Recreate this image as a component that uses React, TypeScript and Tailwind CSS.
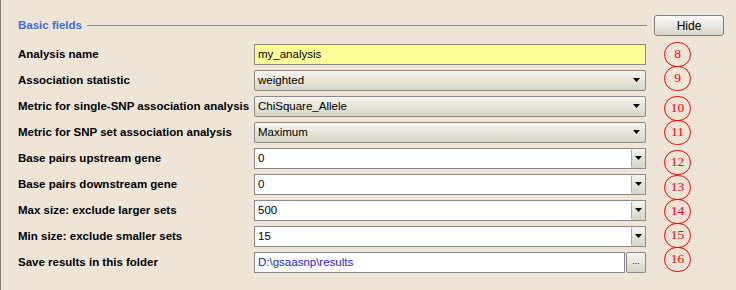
import React from 'react';

type Field =
  | { kind: 'text'; label: string; value: string }
  | { kind: 'select'; label: string; value: string }
  | { kind: 'combo'; label: string; value: string }
  | { kind: 'folder'; label: string; value: string };

const fields: Field[] = [
  { kind: 'text', label: 'Analysis name', value: 'my_analysis' },
  { kind: 'select', label: 'Association statistic', value: 'weighted' },
  { kind: 'select', label: 'Metric for single-SNP association analysis', value: 'ChiSquare_Allele' },
  { kind: 'select', label: 'Metric for SNP set association analysis', value: 'Maximum' },
  { kind: 'combo', label: 'Base pairs upstream gene', value: '0' },
  { kind: 'combo', label: 'Base pairs downstream gene', value: '0' },
  { kind: 'combo', label: 'Max size: exclude larger sets', value: '500' },
  { kind: 'combo', label: 'Min size: exclude smaller sets', value: '15' },
  { kind: 'folder', label: 'Save results in this folder', value: 'D:\\gsaasnp\\results' },
];

// annotation markers: [number, top]
const markers: [number, number][] = [
  [8, 42],
  [9, 66],
  [10, 96],
  [11, 120],
  [12, 150],
  [13, 175],
  [14, 199],
  [15, 223],
  [16, 247],
];

const Arrow = () => (
  <svg width="8" height="5" viewBox="0 0 8 5">
    <path d="M0 0h7L3.5 4z" fill="#000" />
  </svg>
);

const FieldInput: React.FC<{ field: Field }> = ({ field }) => {
  if (field.kind === 'text') {
    return (
      <div className="w-[392px] h-[21px] border border-[#8a8a8a] bg-[#ffff99] flex items-center pl-[3px] text-black">
        {field.value}
      </div>
    );
  }
  if (field.kind === 'select') {
    return (
      <div className="w-[392px] h-[21px] border border-[#8a8a8a] rounded-[2px] bg-gradient-to-b from-[#f6f4ee] to-[#d8d4c7] flex items-center pl-[3px] pr-[4px] text-black">
        <span className="flex-1">{field.value}</span>
        <Arrow />
      </div>
    );
  }
  if (field.kind === 'combo') {
    return (
      <div className="w-[392px] h-[21px] border border-[#8a8a8a] bg-white flex items-center text-black">
        <span className="flex-1 pl-[3px]">{field.value}</span>
        <div className="w-[14px] h-[19px] rounded-[2px] bg-gradient-to-b from-[#f6f4ee] to-[#d8d4c7] border-l border-[#a9a9a9] flex items-center justify-center">
          <Arrow />
        </div>
      </div>
    );
  }
  return (
    <div className="w-[392px] h-[21px] flex gap-[1px]">
      <div className="flex-1 border border-[#8a8a8a] bg-white flex items-center pl-[3px] text-[#2323e6]">
        {field.value}
      </div>
      <div className="w-[20px] h-[21px] border border-[#8a8a8a] rounded-[2px] bg-gradient-to-b from-[#f6f4ee] to-[#d8d4c7] flex items-center justify-center text-[9px] pb-[2px]">
        ...
      </div>
    </div>
  );
};

export default function App() {
  return (
    <div className="relative w-[736px] h-[290px] pt-[15px] bg-[#eee5d7] border-l border-[#808080] font-['Liberation_Sans',Arial,sans-serif] text-[11.5px]">
      <div className="flex items-center h-[21px] pl-[17px] pr-[12px]">
        <span className="font-bold text-[#3b6fd5] text-[11.5px]">Basic fields</span>
        <div className="flex-1 h-px bg-[#8c8c8c] ml-[5px]" />
        <button className="ml-[7px] w-[70px] h-[21px] border border-[#808080] rounded-[3px] bg-gradient-to-b from-[#fbfaf7] to-[#d9d5c8] text-[12px] text-black">
          Hide
        </button>
      </div>

      <div className="flex flex-col gap-[5px] mt-[8px] pl-[17px]">
        {fields.map((f) => (
          <div key={f.label} className="flex items-center h-[21px]">
            <span className="w-[236px] font-bold text-black">{f.label}</span>
            <FieldInput field={f} />
          </div>
        ))}
      </div>

      {markers.map(([n, top]) => (
        <div
          key={n}
          className="absolute left-[663px] w-[27px] h-[25px] rounded-full border-[1.5px] border-[#ff0000] flex items-center justify-center text-[#ff0000] font-['Liberation_Serif',serif] text-[13.5px]"
          style={{ top }}
        >
          {n}
        </div>
      ))}
    </div>
  );
}
